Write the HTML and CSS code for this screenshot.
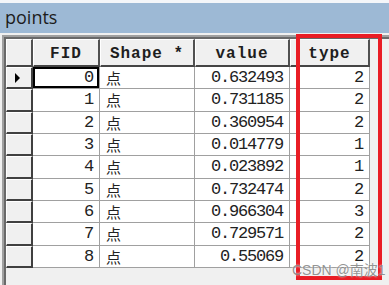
FILE: index.html
```html
<!DOCTYPE html>
<html lang="en">
<head>
    <meta charset="UTF-8">
    <title>points - Attribute Table</title>
    <link rel="stylesheet" href="styles.css">
</head>
<body>
    <div class="window">
        <div class="titlebar">points</div>

        <div class="frame">
            <div class="grid">
                <div class="hd corner"></div>
                <div class="hd">FID</div>
                <div class="hd">Shape *</div>
                <div class="hd">value</div>
                <div class="hd">type</div>

                <div class="ind"><span class="arrow"></span></div>
                <div class="cell num current">0</div>
                <div class="cell shape">点</div>
                <div class="cell num">0.632493</div>
                <div class="cell num">2</div>

                <div class="ind"></div>
                <div class="cell num">1</div>
                <div class="cell shape">点</div>
                <div class="cell num">0.731185</div>
                <div class="cell num">2</div>

                <div class="ind"></div>
                <div class="cell num">2</div>
                <div class="cell shape">点</div>
                <div class="cell num">0.360954</div>
                <div class="cell num">2</div>

                <div class="ind"></div>
                <div class="cell num">3</div>
                <div class="cell shape">点</div>
                <div class="cell num">0.014779</div>
                <div class="cell num">1</div>

                <div class="ind"></div>
                <div class="cell num">4</div>
                <div class="cell shape">点</div>
                <div class="cell num">0.023892</div>
                <div class="cell num">1</div>

                <div class="ind"></div>
                <div class="cell num">5</div>
                <div class="cell shape">点</div>
                <div class="cell num">0.732474</div>
                <div class="cell num">2</div>

                <div class="ind"></div>
                <div class="cell num">6</div>
                <div class="cell shape">点</div>
                <div class="cell num">0.966304</div>
                <div class="cell num">3</div>

                <div class="ind"></div>
                <div class="cell num">7</div>
                <div class="cell shape">点</div>
                <div class="cell num">0.729571</div>
                <div class="cell num">2</div>

                <div class="ind"></div>
                <div class="cell num">8</div>
                <div class="cell shape">点</div>
                <div class="cell num">0.55069</div>
                <div class="cell num">2</div>
            </div>
        </div>

        <!-- red box drawn over the type column -->
        <div class="highlight"></div>
        <div class="watermark">CSDN @南波1</div>
    </div>
</body>
</html>
```

FILE: styles.css
```css
html, body {
    margin: 0;
    padding: 0;
}
body {
    background: #f0f0f0;
    width: 389px;
    height: 285px;
    overflow: hidden;
}
.window {
    position: relative;
    width: 389px;
    height: 285px;
}
.titlebar {
    border-top: 3px solid #f4f6f9;
    height: 30px;
    background: #9db9d5;
    color: #1c1c1c;
    font-family: "Open Sans", "Noto Sans", sans-serif;
    font-size: 18px;
    line-height: 28px;
    padding-left: 5px;
}
.frame {
    margin: 2px 0 0 2px;
    border-left: 2px solid #a0a0a0;
    border-top: 2px solid #a0a0a0;
    height: 248px;
}
.grid {
    border-left: 2px solid #696969;
    border-top: 2px solid #696969;
    height: 246px;
    display: grid;
    grid-template-columns: 27px 67px 95px 95px 80px;
    grid-template-rows: 28px repeat(9, 22.33px);
    align-content: start;
}
.hd {
    box-sizing: border-box;
    background: #f0f0f0;
    border-top: 1px solid #fff;
    border-left: 1px solid #fff;
    border-right: 2px solid #505050;
    border-bottom: 2px solid #454545;
    font-family: "Liberation Mono", monospace;
    font-weight: bold;
    font-size: 16px;
    letter-spacing: 1px;
    color: #1e1e1e;
    display: flex;
    align-items: center;
    justify-content: center;
    padding-top: 3px;
}
.ind {
    box-sizing: border-box;
    background: #f0f0f0;
    border-top: 1px solid #fff;
    border-left: 1px solid #fff;
    border-right: 2px solid #404040;
    border-bottom: 2px solid #404040;
    display: flex;
    align-items: center;
    justify-content: center;
}
.arrow {
    width: 0;
    height: 0;
    border-top: 5px solid transparent;
    border-bottom: 5px solid transparent;
    border-left: 5px solid #000;
    margin-right: 3px;
}
.cell {
    box-sizing: border-box;
    background: #fff;
    border-right: 1px solid #a0a0a0;
    border-bottom: 1px solid #a0a0a0;
    display: flex;
    align-items: center;
    color: #222;
}
.num {
    justify-content: flex-end;
    font-family: "Liberation Mono", monospace;
    font-size: 17px;
    letter-spacing: -1.2px;
    padding-right: 6px;
}
.shape {
    font-family: "Noto Sans CJK SC", sans-serif;
    font-size: 15px;
    padding-left: 6px;
}
.current {
    box-shadow: inset 0 0 0 2px #000;
}
.highlight {
    position: absolute;
    left: 296px;
    top: 34px;
    width: 78px;
    height: 238px;
    border: 4px solid #e91d25;
}
.watermark {
    position: absolute;
    left: 292px;
    top: 259px;
    font-family: "Liberation Sans", "Noto Sans CJK SC", sans-serif;
    font-size: 14px;
    color: rgba(120, 120, 120, 0.8);
    text-shadow: 0 0 2px #fff;
}
```
